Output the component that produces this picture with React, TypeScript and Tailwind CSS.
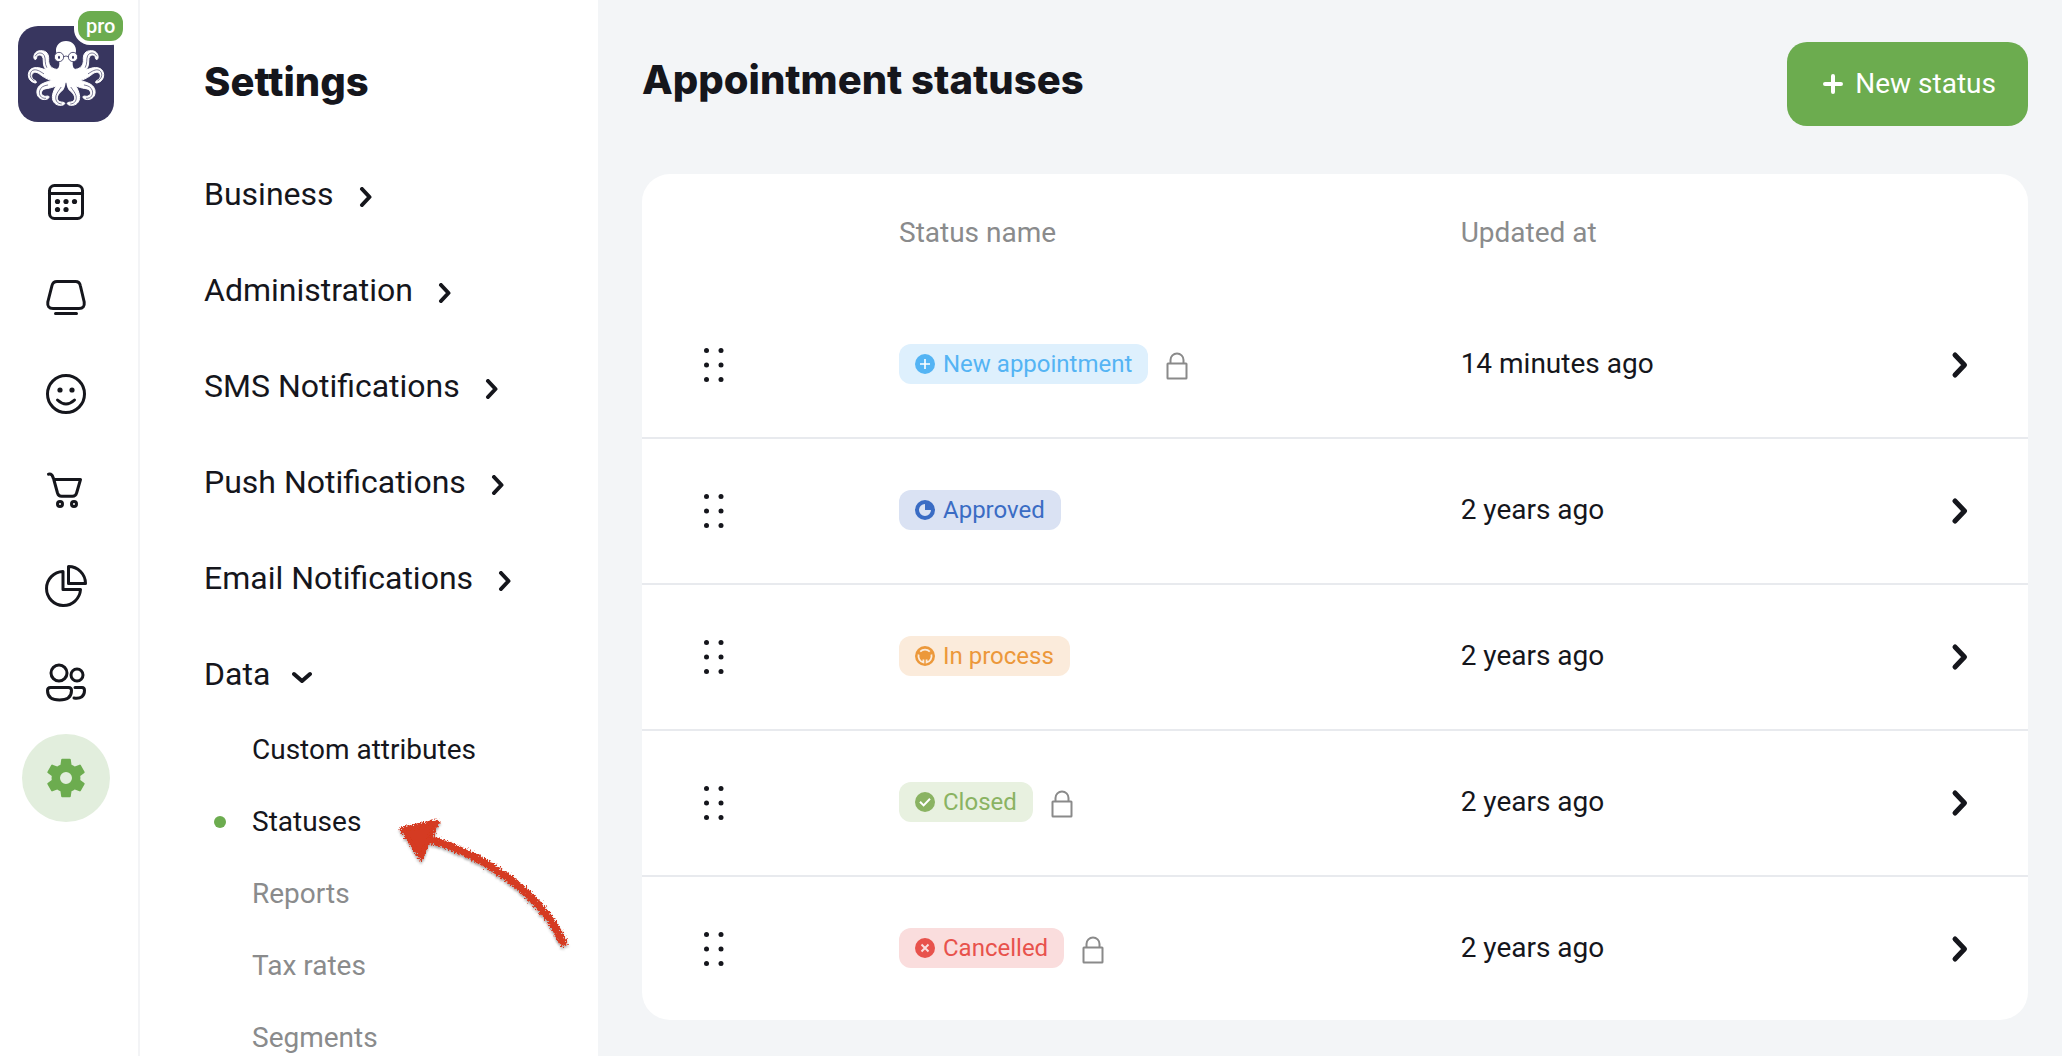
import type { ReactNode } from "react";

const INK = "#15161c";

function OctopusArms() {
  return (
    <g>
      <g fill="#fff" stroke="#fff" strokeWidth="3" strokeLinejoin="round">
        {/* upper arm */}
        <path d="M182 226C158 228 141 219 133 202C127 189 133 176 126 168C119 162 110 166 110 173C110 177 107 180 104 178C98 172 103 152 121 152C141 151 147 164 146 179C145 194 153 206 170 208L184 204Z" />
        {/* middle arm */}
        <path d="M180 222C160 222 146 213 132 208C118 202 101 200 91 209C81 220 84 238 96 245C103 250 111 250 109 246C109 242 102 241 98 236C92 228 96 219 104 217C114 215 121 226 133 232C145 240 160 244 178 240Z" />
        {/* lower arm */}
        <path d="M180 236C160 240 145 243 132 249C116 255 109 267 111 280C113 294 126 301 138 298C147 297 149 290 145 288C140 288 134 291 128 286C120 279 126 268 138 266C152 264 170 260 186 246Z" />
        {/* bottom arm */}
        <path d="M178 238C172 254 161 267 158 283C154 301 163 314 178 316C191 317 197 311 193 308C188 305 180 308 175 302C167 292 176 282 184 274C193 266 197 258 198 248L198 230Z" />
      </g>
      <g fill="none" stroke="#38365f" strokeWidth="2" strokeLinecap="round">
        <path d="M106 168C112 156 127 156 133 167C138 178 133 190 140 202" />
        <path d="M102 242C88 235 87 218 98 211C109 206 120 214 131 221" />
        <path d="M137 295C122 296 116 284 119 272C122 262 130 257 143 255" />
        <path d="M184 312C170 311 165 299 168 287C171 277 178 270 183 262" />
      </g>
    </g>
  );
}

function Octopus() {
  return (
    <svg viewBox="54 78 288 288" className="size-24" aria-hidden="true">
      <OctopusArms />
      <g transform="translate(396 0) scale(-1 1)">
        <OctopusArms />
      </g>
      <path
        fill="#fff"
        d="M198 123C179 123 167 137 168 153C169 168 178 178 178 190C178 204 172 210 162 216L156 238L176 250H220L240 238L234 216C224 210 218 204 218 190C218 178 227 168 228 153C229 137 217 123 198 123Z"
      />
      <path fill="#38365f" d="M197 248C195 260 193 266 190 272H206C203 266 201 260 199 248Z" />
      <g fill="none" stroke="#38365f" strokeWidth="2.5">
        <circle cx="177" cy="171" r="14" fill="#fff" />
        <circle cx="219" cy="171" r="14" fill="#fff" />
        <path d="M191 170Q198 166 205 170M163 168L157 164M233 168L239 164" />
      </g>
      <ellipse cx="177" cy="172" rx="3" ry="5" fill="#38365f" />
      <ellipse cx="219" cy="172" rx="3" ry="5" fill="#38365f" />
    </svg>
  );
}

function RailIcon({ children }: { children: ReactNode }) {
  return (
    <svg
      viewBox="0 0 44 44"
      className="size-11"
      fill="none"
      stroke={INK}
      strokeWidth="3"
      strokeLinecap="round"
      strokeLinejoin="round"
      aria-hidden="true"
    >
      {children}
    </svg>
  );
}

const railItems: { label: string; icon: ReactNode }[] = [
  {
    label: "Calendar",
    icon: (
      <RailIcon>
        <rect x="5.5" y="5.5" width="33" height="33" rx="5" />
        <path d="M5.5 13.5H38.5" />
        <g fill={INK} stroke="none">
          <circle cx="13.5" cy="21.5" r="2.6" />
          <circle cx="22" cy="21.5" r="2.6" />
          <circle cx="30.5" cy="21.5" r="2.6" />
          <circle cx="13.5" cy="29.5" r="2.6" />
          <circle cx="22" cy="29.5" r="2.6" />
        </g>
      </RailIcon>
    ),
  },
  {
    label: "Resources",
    icon: (
      <RailIcon>
        <path d="M13 5.5H31.5Q35.5 5.5 36.3 9.5L40.2 26Q41 32.5 35 32.5H9Q3 32.5 3.8 26L8 9.5Q9 5.5 13 5.5ZM11.5 37.5H32.5" />
      </RailIcon>
    ),
  },
  {
    label: "Clients",
    icon: (
      <RailIcon>
        <circle cx="22" cy="22" r="18.5" />
        <path d="M13.5 28Q22 36 30.5 28" />
        <circle cx="16" cy="18" r="2.6" fill={INK} stroke="none" />
        <circle cx="28" cy="18" r="2.6" fill={INK} stroke="none" />
      </RailIcon>
    ),
  },
  {
    label: "Shop",
    icon: (
      <RailIcon>
        <path d="M4.5 6.2Q8 5.5 9 9.5L10 11.5H36.5L32.6 25Q31.8 28.3 28.5 28.3H17.5Q14.500 28.3 13.500 25L9.8 11.5" />
        <circle cx="16" cy="36" r="2.5" />
        <circle cx="30" cy="36" r="2.5" />
      </RailIcon>
    ),
  },
  {
    label: "Analytics",
    icon: (
      <RailIcon>
        <path d="M19 7.5A17 17 0 1 0 36.5 25.5H19Z" />
        <path d="M24.5 2.5V19.5H41.5A17 17 0 0 0 24.5 2.5Z" />
      </RailIcon>
    ),
  },
  {
    label: "Employees",
    icon: (
      <RailIcon>
        <circle cx="15" cy="13" r="8" />
        <circle cx="33" cy="15" r="6" />
        <path d="M6.5 27.5H24.5Q27.5 27.5 27.5 30.5C27.5 37.5 22.5 40 15.5 40S3.5 37.5 3.5 30.5Q3.5 27.5 6.5 27.5Z" />
        <path d="M31 27.5H38Q40.5 27.5 40.5 30.5C40.5 36 37 39 30 38" />
      </RailIcon>
    ),
  },
];

function GearIcon() {
  return (
    <svg viewBox="0 0 24 24" className="size-12" fill="#6cac4f" aria-hidden="true">
      <path d="M19.140 12.940c.04-.3.060-.61.060-.94 0-.32-.02-.64-.07-.94l2.030-1.580a.49.49 0 0 0 .12-.61l-1.920-3.320a.488.488 0 0 0-.59-.22l-2.390.96c-.5-.38-1.030-.7-1.620-.94l-.36-2.540a.484.484 0 0 0-.48-.41h-3.840c-.24 0-.43.17-.47.410l-.36 2.540c-.59.240-1.130.570-1.620.940l-2.390-.96c-.22-.08-.47 0-.59.220L2.740 8.870c-.12.210-.08.470.120.610l2.030 1.580c-.05.300-.09.630-.09.940s.02.640.070.940l-2.030 1.580a.49.49 0 0 0-.12.610l1.920 3.320c.12.220.370.290.590.220l2.390-.96c.500.380 1.030.700 1.620.940l.360 2.540c.05.240.240.410.480.410h3.840c.240 0 .440-.17.470-.41l.360-2.540c.590-.24 1.130-.56 1.620-.94l2.390.960c.220.080.470 0 .590-.22l1.920-3.320c.120-.22.070-.47-.12-.61l-2.010-1.580zM12 15a3 3 0 1 1 0-6 3 3 0 0 1 0 6z" />
    </svg>
  );
}

function Chevron({ open = false }: { open?: boolean }) {
  return (
    <svg
      viewBox="0 0 20 20"
      className="size-5"
      fill="none"
      stroke={INK}
      strokeWidth="4"
      strokeLinecap="round"
      strokeLinejoin="round"
      aria-hidden="true"
    >
      <path d={open ? "M2 7L10 14L18 7" : "M6 2L13.5 10L6 18"} />
    </svg>
  );
}

function LockIcon() {
  return (
    <svg
      viewBox="0 0 22 28"
      className="mt-1 h-7 w-[22px]"
      fill="none"
      stroke="#8a8a8a"
      strokeWidth="2"
      strokeLinejoin="round"
      role="img"
      aria-label="Locked"
    >
      <rect x="1.5" y="11.5" width="19" height="15" rx="0.5" />
      <path d="M4.5 11.5V8A6.5 6.5 0 0 1 17.5 8V11.5" />
    </svg>
  );
}

const sections = ["Business", "Administration", "SMS Notifications", "Push Notifications", "Email Notifications"];

const dataLinks = [
  { label: "Custom attributes", tone: "text-[#15161c]", active: false },
  { label: "Statuses", tone: "text-[#15161c]", active: true },
  { label: "Reports", tone: "text-[#8a8b8c]", active: false },
  { label: "Tax rates", tone: "text-[#8a8b8c]", active: false },
  { label: "Segments", tone: "text-[#8a8b8c]", active: false },
];

const statuses: {
  name: string;
  badge: string;
  updated: string;
  locked: boolean;
  glyph: ReactNode;
}[] = [
  {
    name: "New appointment",
    badge: "bg-[#def0fd] text-[#54b4f4]",
    updated: "14 minutes ago",
    locked: true,
    glyph: <path d="M10 5V15M5 10H15" stroke="#fff" strokeWidth="1.6" />,
  },
  {
    name: "Approved",
    badge: "bg-[#dae2f3] text-[#3a6cc4]",
    updated: "2 years ago",
    locked: false,
    glyph: <path d="M10 4A6 6 0 1 0 16 10H10Z" fill="#dae2f3" />,
  },
  {
    name: "In process",
    badge: "bg-[#fbebdb] text-[#ec983a]",
    updated: "2 years ago",
    locked: false,
    glyph: (
      <g fill="none" stroke="#fbebdb" strokeWidth="1.8">
        <path d="M5.2 5.6A6.6 6.6 0 0 1 14.8 5.6" />
        <path d="M16.4 8.5A6.6 6.6 0 0 1 11.6 16.4V13.500" />
        <path d="M8.400 13.500V16.4A6.6 6.6 0 0 1 3.6 8.5" />
      </g>
    ),
  },
  {
    name: "Closed",
    badge: "bg-[#e8f1e0] text-[#8ab362]",
    updated: "2 years ago",
    locked: true,
    glyph: <path d="M5 9.8L8.6 13.4L15 6.8" fill="none" stroke="#fff" strokeWidth="2" />,
  },
  {
    name: "Cancelled",
    badge: "bg-[#fadddd] text-[#e8524c]",
    updated: "2 years ago",
    locked: true,
    glyph: <path d="M6.5 6.5L13.5 13.5M13.5 6.5L6.5 13.5" stroke="#fadddd" strokeWidth="2" />,
  },
];

function DragHandle() {
  return (
    <svg viewBox="0 0 20 34" className="h-[34px] w-5" fill={INK} aria-hidden="true">
      {[2.5, 17].map((x) => [2.5, 17, 31.5].map((y) => <circle key={`${x}-${y}`} cx={x} cy={y} r="2.5" />))}
    </svg>
  );
}

function HandDrawnArrow() {
  return (
    <svg
      viewBox="0 0 190 150"
      className="pointer-events-none absolute top-[22px] left-[172px] h-[150px] w-[190px] overflow-visible"
      aria-hidden="true"
    >
      <defs>
        <filter id="crayon" x="-10%" y="-10%" width="120%" height="125%">
          <feTurbulence type="fractalNoise" baseFrequency="0.6" numOctaves="2" seed="4" result="noise" />
          <feDisplacementMap in="SourceGraphic" in2="noise" scale="7" xChannelSelector="R" yChannelSelector="G" result="rough" />
          <feDropShadow in="rough" dx="0" dy="2" stdDeviation="1.2" floodColor="#000" floodOpacity="0.35" />
        </filter>
      </defs>
      <g filter="url(#crayon)" stroke="#d53a20" strokeLinecap="round" strokeLinejoin="round">
        <path d="M14 21L49 14L33 50Z" fill="#d53a20" strokeWidth="5" />
        <path d="M44 32C90 46 150 80 175 134" fill="none" strokeWidth="8" />
      </g>
    </svg>
  );
}

export default function App() {
  return (
    <div className="flex h-screen overflow-hidden bg-[#f3f5f7] font-['Roboto',sans-serif] text-[#15161c]">
      <nav aria-label="Main" className="flex w-[140px] shrink-0 flex-col border-r-2 border-[#f3f4f6] bg-white pt-[26px]">
        <a href="#home" aria-label="Home" className="relative ml-[18px] size-24 rounded-[20px] bg-[#38365f]">
          <Octopus />
          <span className="absolute -top-[19px] left-14 flex h-[38px] items-center rounded-2xl border-4 border-white bg-[#6cac4f] px-2 text-[20px] font-medium text-white">
            pro
          </span>
        </a>
        <ul className="mt-8 flex flex-col">
          {railItems.map((item) => (
            <li key={item.label}>
              <a href="#section" aria-label={item.label} className="mr-1.5 flex h-24 items-center justify-center">
                {item.icon}
              </a>
            </li>
          ))}
          <li className="mr-1.5 flex h-24 items-center justify-center">
            <a
              href="#settings"
              aria-label="Settings"
              aria-current="page"
              className="flex size-[88px] items-center justify-center rounded-full bg-[#e2eedd]"
            >
              <GearIcon />
            </a>
          </li>
        </ul>
      </nav>

      <aside className="w-[458px] shrink-0 bg-white pt-14 pl-16">
        <h2 className="font-['Inter',sans-serif] text-[40px] leading-[52px] font-extrabold">Settings</h2>
        <ul className="mt-[38px]">
          {sections.map((label) => (
            <li key={label}>
              <button type="button" className="flex h-24 items-center gap-[22px] text-[32px]">
                {label}
                <span className="mt-1.5">
                  <Chevron />
                </span>
              </button>
            </li>
          ))}
          <li>
            <button type="button" aria-expanded="true" className="flex h-24 items-center gap-[22px] text-[32px]">
              Data
              <span className="mt-1.5">
                <Chevron open />
              </span>
            </button>
            <ul className="-mt-2 pl-3">
              {dataLinks.map((link) => (
                <li key={link.label} className="relative">
                  <a href="#data" className={`flex h-[72px] items-center text-[28px] ${link.tone}`}>
                    <span className="w-9">
                      {link.active && <span className="ml-[-2px] block size-3 rounded-full bg-[#6cac4f]" />}
                    </span>
                    {link.label}
                  </a>
                  {link.active && <HandDrawnArrow />}
                </li>
              ))}
            </ul>
          </li>
        </ul>
      </aside>

      <main className="min-w-0 flex-1 pt-[42px] pr-[34px] pl-11">
        <header className="flex items-center justify-between">
          <h1 className="pb-2 font-['Inter',sans-serif] text-[40px] leading-[52px] font-extrabold">Appointment statuses</h1>
          <button
            type="button"
            className="flex h-[84px] items-center gap-3 rounded-[20px] bg-[#6cac4f] pr-8 pl-9 text-[28px] text-white"
          >
            <svg viewBox="0 0 20 20" className="size-5" aria-hidden="true">
              <path d="M10 2V18M2 10H18" stroke="#fff" strokeWidth="4" strokeLinecap="round" />
            </svg>
            New status
          </button>
        </header>

        <div className="mt-12 overflow-hidden rounded-[28px] bg-white">
          <table className="w-full table-fixed text-left">
            <colgroup>
              <col className="w-[257px]" />
              <col />
              <col className="w-[33%]" />
              <col className="w-[110px]" />
            </colgroup>
            <thead>
              <tr className="h-[118px] text-[28px] text-[#8a8b8c]">
                <td />
                <th scope="col" className="font-normal">
                  Status name
                </th>
                <th scope="col" className="font-normal">
                  Updated at
                </th>
                <td />
              </tr>
            </thead>
            <tbody>
              {statuses.map((status) => (
                <tr
                  key={status.name}
                  className="h-[146px] border-b-2 border-[#e8eaee] last:h-[144px] last:border-b-0"
                >
                  <td>
                    <button type="button" aria-label={`Move ${status.name}`} className="ml-[62px] block">
                      <DragHandle />
                    </button>
                  </td>
                  <td className="pb-0.5">
                    <div className="flex items-center gap-[18px]">
                      <span className={`flex h-10 items-center gap-2 rounded-xl px-4 text-[24px] ${status.badge}`}>
                        <svg viewBox="0 0 20 20" className="size-5" aria-hidden="true">
                          <circle cx="10" cy="10" r="10" fill="currentColor" />
                          {status.glyph}
                        </svg>
                        {status.name}
                      </span>
                      {status.locked && <LockIcon />}
                    </div>
                  </td>
                  <td className="pb-0.5 text-[28px]">{status.updated}</td>
                  <td>
                    <button type="button" aria-label={`Open ${status.name}`} className="ml-[30px] block">
                      <svg
                        viewBox="0 0 24 28"
                        className="h-7 w-6"
                        fill="none"
                        stroke={INK}
                        strokeWidth="5"
                        strokeLinecap="round"
                        strokeLinejoin="round"
                        aria-hidden="true"
                      >
                        <path d="M7 4L16.5 14L7 24" />
                      </svg>
                    </button>
                  </td>
                </tr>
              ))}
            </tbody>
          </table>
        </div>
      </main>
    </div>
  );
}
